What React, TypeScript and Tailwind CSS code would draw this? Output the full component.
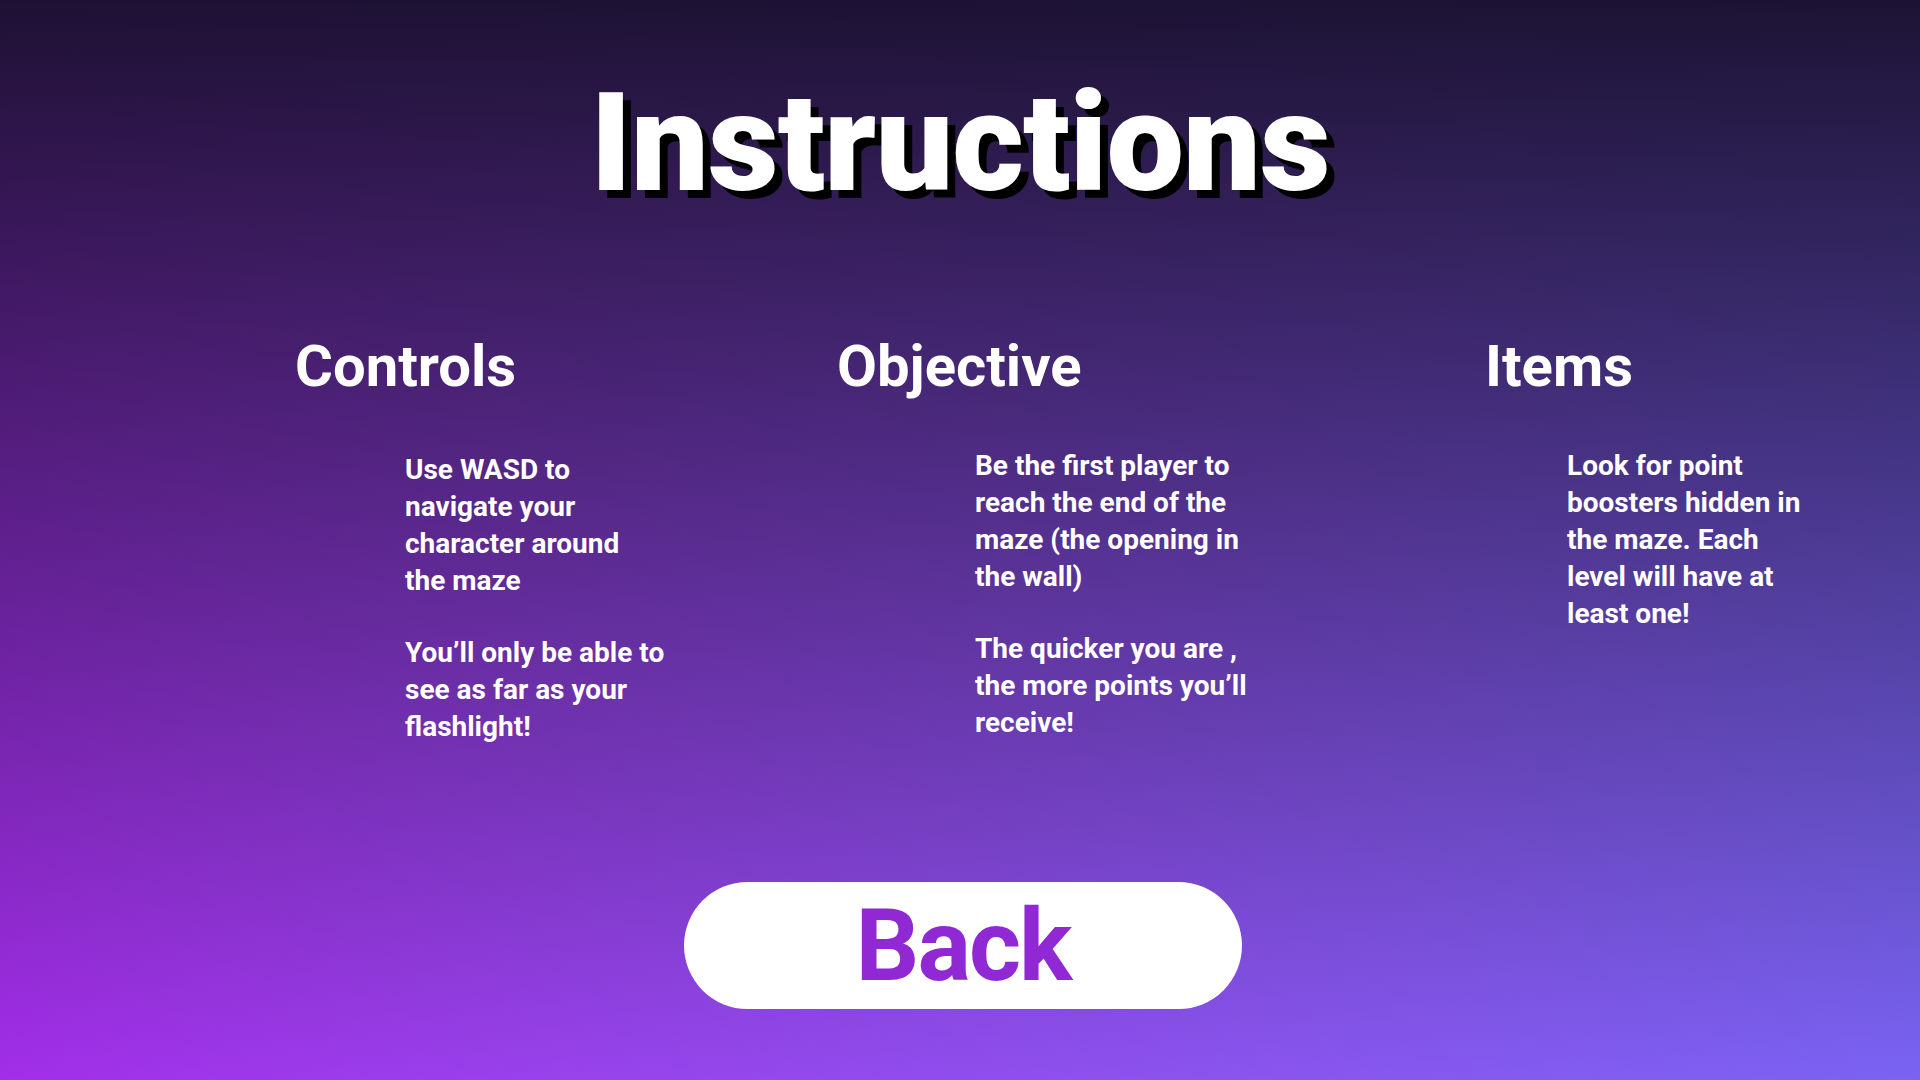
const sections = [
  {
    title: 'Controls',
    colWidth: 'w-[542px]',
    bodyOffset: 'ml-[110px] mt-[56px]',
    paragraphs: [
      ['Use WASD to', 'navigate your', 'character around', 'the maze'],
      ['You’ll only be able to', 'see as far as your', 'flashlight!'],
    ],
  },
  {
    title: 'Objective',
    colWidth: 'w-[648px]',
    bodyOffset: 'ml-[138px] mt-[52px]',
    paragraphs: [
      ['Be the first player to', 'reach the end of the', 'maze (the opening in', 'the wall)'],
      ['The quicker you are ,', 'the more points you’ll', 'receive!'],
    ],
  },
  {
    title: 'Items',
    colWidth: 'flex-1',
    bodyOffset: 'ml-[82px] mt-[52px]',
    paragraphs: [['Look for point', 'boosters hidden in', 'the maze. Each', 'level will have at', 'least one!']],
  },
]

function Section({ section }: { section: (typeof sections)[number] }) {
  return (
    <div className={section.colWidth}>
      <h2 className="text-[58px] leading-none font-bold text-white">{section.title}</h2>
      <div className={`${section.bodyOffset} space-y-[35px]`}>
        {section.paragraphs.map((lines, i) => (
          <p key={i} className="text-[28px] leading-[37px] font-bold whitespace-nowrap text-white">
            {lines.map((line, j) => (
              <span key={j} className="block">
                {line}
              </span>
            ))}
          </p>
        ))}
      </div>
    </div>
  )
}

export default function App() {
  return (
    <div className="h-[1080px] w-full overflow-hidden bg-linear-to-r from-[#a22ee9] to-[#7a63f3] font-[Roboto,sans-serif]">
      <div className="flex h-full w-full flex-col bg-linear-to-b from-[rgba(24,16,44,0.96)] to-[rgba(24,16,44,0)]">
        <h1 className="mt-[74px] text-center text-[138px] leading-none font-black tracking-[-1px] text-white [text-shadow:8px_8px_0_#000]">
          Instructions
        </h1>

        <div className="mt-[125px] flex pl-[295px]">
          {sections.map((section) => (
            <Section key={section.title} section={section} />
          ))}
        </div>

        <div className="mt-[137px] flex justify-center pl-[6px]">
          <button
            type="button"
            className="flex h-[127px] w-[558px] items-center justify-center rounded-full bg-white text-[100px] leading-none font-bold tracking-[-2px] text-[#9029d4]"
          >
            Back
          </button>
        </div>
      </div>
    </div>
  )
}
